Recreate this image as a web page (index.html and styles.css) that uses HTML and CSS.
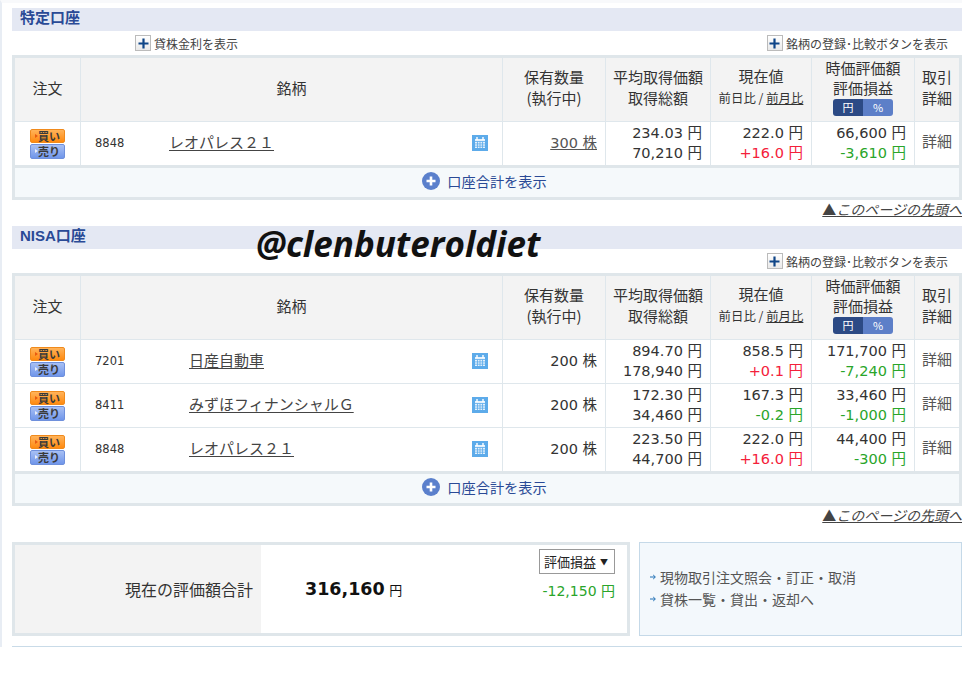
FILE: index.html
```html
<!DOCTYPE html>
<html lang="ja">
<head>
    <meta charset="UTF-8">
    <title>口座管理</title>
    <link rel="stylesheet" href="styles.css">
</head>
<body>
    <div class="page">
        <div class="watermark">@clenbuteroldiet</div>

        <!-- 特定口座 -->
        <h2 class="section-title">特定口座</h2>
        <div class="tools">
            <a class="tool tool-rate"><span class="plus-box"><svg width="11" height="11" viewBox="0 0 11 11"><path d="M5.5 0.5v10M0.5 5.5h10" stroke="#0f4587" stroke-width="2.2" fill="none"/></svg></span>貸株金利を表示</a>
            <a class="tool"><span class="plus-box"><svg width="11" height="11" viewBox="0 0 11 11"><path d="M5.5 0.5v10M0.5 5.5h10" stroke="#0f4587" stroke-width="2.2" fill="none"/></svg></span>銘柄の登録･比較ボタンを表示</a>
        </div>
        <div class="holdings">
            <table>
                <colgroup>
                    <col class="c-order"><col class="c-name"><col class="c-qty"><col class="c-avg"><col class="c-now"><col class="c-val"><col class="c-detail">
                </colgroup>
                <thead>
                    <tr>
                        <th>注文</th>
                        <th>銘柄</th>
                        <th>保有数量<br>(執行中)</th>
                        <th>平均取得価額<br>取得総額</th>
                        <th>現在値<br><span class="sub">前日比 / <u>前月比</u></span></th>
                        <th class="th-val">時価評価額<br>評価損益<div class="toggle"><span class="on">円</span><span class="off">%</span></div></th>
                        <th>取引<br>詳細</th>
                    </tr>
                </thead>
                <tbody>
                    <tr>
                        <td class="order"><div class="buy">買い</div><div class="sell">売り</div></td>
                        <td><div class="stock"><span class="code code-short">8848</span><a class="name">レオパレス２１</a><svg class="cal" width="16" height="16" viewBox="0 0 16 16"><rect width="16" height="16" fill="#5dabea"/><path d="M3 4h10v9H3z" fill="#e4f1fc"/><path d="M3 6.5h10M3 8.9h10M3 11.2h10M5.5 6.5v6.5M8 6.5v6.5M10.5 6.5v6.5" stroke="#5dabea" stroke-width=".8"/><path d="M5 2v3M11 2v3" stroke="#fff" stroke-width="1.4"/></svg></div></td>
                        <td class="num"><u class="qty-link">300 株</u></td>
                        <td class="num">234.03 円<br>70,210 円</td>
                        <td class="num">222.0 円<br><span class="up">+16.0 円</span></td>
                        <td class="num">66,600 円<br><span class="down">-3,610 円</span></td>
                        <td class="detail">詳細</td>
                    </tr>
                </tbody>
            </table>
            <div class="total-row"><svg width="18" height="18" viewBox="0 0 18 18"><circle cx="9" cy="9" r="9" fill="#5b80cc"/><path d="M9 4.5v9M4.5 9h9" stroke="#fff" stroke-width="2.6"/></svg>口座合計を表示</div>
        </div>
        <div class="page-top"><a><b>▲</b><u>このページの先頭へ</u></a></div>

        <!-- NISA口座 -->
        <h2 class="section-title">NISA口座</h2>
        <div class="tools tools-end">
            <a class="tool"><span class="plus-box"><svg width="11" height="11" viewBox="0 0 11 11"><path d="M5.5 0.5v10M0.5 5.5h10" stroke="#0f4587" stroke-width="2.2" fill="none"/></svg></span>銘柄の登録･比較ボタンを表示</a>
        </div>
        <div class="holdings">
            <table>
                <colgroup>
                    <col class="c-order"><col class="c-name"><col class="c-qty"><col class="c-avg"><col class="c-now"><col class="c-val"><col class="c-detail">
                </colgroup>
                <thead>
                    <tr>
                        <th>注文</th>
                        <th>銘柄</th>
                        <th>保有数量<br>(執行中)</th>
                        <th>平均取得価額<br>取得総額</th>
                        <th>現在値<br><span class="sub">前日比 / <u>前月比</u></span></th>
                        <th class="th-val">時価評価額<br>評価損益<div class="toggle"><span class="on">円</span><span class="off">%</span></div></th>
                        <th>取引<br>詳細</th>
                    </tr>
                </thead>
                <tbody>
                    <tr>
                        <td class="order"><div class="buy">買い</div><div class="sell">売り</div></td>
                        <td><div class="stock"><span class="code">7201</span><a class="name">日産自動車</a><svg class="cal" width="16" height="16" viewBox="0 0 16 16"><rect width="16" height="16" fill="#5dabea"/><path d="M3 4h10v9H3z" fill="#e4f1fc"/><path d="M3 6.5h10M3 8.9h10M3 11.2h10M5.5 6.5v6.5M8 6.5v6.5M10.5 6.5v6.5" stroke="#5dabea" stroke-width=".8"/><path d="M5 2v3M11 2v3" stroke="#fff" stroke-width="1.4"/></svg></div></td>
                        <td class="num">200 株</td>
                        <td class="num">894.70 円<br>178,940 円</td>
                        <td class="num">858.5 円<br><span class="up">+0.1 円</span></td>
                        <td class="num">171,700 円<br><span class="down">-7,240 円</span></td>
                        <td class="detail">詳細</td>
                    </tr>
                    <tr>
                        <td class="order"><div class="buy">買い</div><div class="sell">売り</div></td>
                        <td><div class="stock"><span class="code">8411</span><a class="name">みずほフィナンシャルＧ</a><svg class="cal" width="16" height="16" viewBox="0 0 16 16"><rect width="16" height="16" fill="#5dabea"/><path d="M3 4h10v9H3z" fill="#e4f1fc"/><path d="M3 6.5h10M3 8.9h10M3 11.2h10M5.5 6.5v6.5M8 6.5v6.5M10.5 6.5v6.5" stroke="#5dabea" stroke-width=".8"/><path d="M5 2v3M11 2v3" stroke="#fff" stroke-width="1.4"/></svg></div></td>
                        <td class="num">200 株</td>
                        <td class="num">172.30 円<br>34,460 円</td>
                        <td class="num">167.3 円<br><span class="down">-0.2 円</span></td>
                        <td class="num">33,460 円<br><span class="down">-1,000 円</span></td>
                        <td class="detail">詳細</td>
                    </tr>
                    <tr>
                        <td class="order"><div class="buy">買い</div><div class="sell">売り</div></td>
                        <td><div class="stock"><span class="code">8848</span><a class="name">レオパレス２１</a><svg class="cal" width="16" height="16" viewBox="0 0 16 16"><rect width="16" height="16" fill="#5dabea"/><path d="M3 4h10v9H3z" fill="#e4f1fc"/><path d="M3 6.5h10M3 8.9h10M3 11.2h10M5.5 6.5v6.5M8 6.5v6.5M10.5 6.5v6.5" stroke="#5dabea" stroke-width=".8"/><path d="M5 2v3M11 2v3" stroke="#fff" stroke-width="1.4"/></svg></div></td>
                        <td class="num">200 株</td>
                        <td class="num">223.50 円<br>44,700 円</td>
                        <td class="num">222.0 円<br><span class="up">+16.0 円</span></td>
                        <td class="num">44,400 円<br><span class="down">-300 円</span></td>
                        <td class="detail">詳細</td>
                    </tr>
                </tbody>
            </table>
            <div class="total-row"><svg width="18" height="18" viewBox="0 0 18 18"><circle cx="9" cy="9" r="9" fill="#5b80cc"/><path d="M9 4.5v9M4.5 9h9" stroke="#fff" stroke-width="2.6"/></svg>口座合計を表示</div>
        </div>
        <div class="page-top"><a><b>▲</b><u>このページの先頭へ</u></a></div>

        <!-- 評価額合計 -->
        <div class="summary">
            <div class="sum-box">
                <div class="sum-label">現在の評価額合計</div>
                <div class="sum-value"><b>316,160</b> <span>円</span></div>
                <div class="sum-side">
                    <div class="select">評価損益<i>▼</i></div>
                    <div class="down">-12,150 円</div>
                </div>
            </div>
            <div class="sum-links">
                <a><svg width="6" height="6" viewBox="0 0 6 6"><path d="M0 3h5M3.2 1L5.4 3 3.2 5" stroke="#1f6fb5" fill="none"/></svg>現物取引注文照会・訂正・取消</a>
                <a><svg width="6" height="6" viewBox="0 0 6 6"><path d="M0 3h5M3.2 1L5.4 3 3.2 5" stroke="#1f6fb5" fill="none"/></svg>貸株一覧・貸出・返却へ</a>
            </div>
        </div>
        <div class="page-end"></div>
    </div>
</body>
</html>
```

FILE: styles.css
```css
* {
    margin: 0;
    padding: 0;
    box-sizing: border-box;
}

body {
    font-family: "DejaVu Sans", "Noto Sans CJK JP", sans-serif;
    background-color: white;
    color: #333;
    font-size: 14px;
}

.page {
    position: relative;
    height: 647px;
    border-left: 2px solid #e8edf4;
    border-top: 3px solid #f8f9fb;
    margin-right: 9px;
    padding: 5px 0 0 10px;
}

.watermark {
    position: absolute;
    left: 254px;
    top: 221px;
    font-family: "Open Sans", sans-serif;
    font-size: 35px;
    line-height: 40px;
    font-weight: bold;
    font-style: italic;
    color: #111;
}

.section-title {
    height: 23px;
    padding-left: 8px;
    background-color: #e4e8f3;
    color: #2a4a96;
    font-size: 15px;
    line-height: 20px;
    font-family: "Liberation Sans", "Noto Sans CJK JP", sans-serif;
}

.tools {
    height: 24px;
    display: flex;
    justify-content: space-between;
    align-items: center;
    padding: 0 14px 0 123px;
}

.tools-end {
    justify-content: flex-end;
}

.tool {
    display: flex;
    align-items: center;
    font-size: 12px;
    color: #444;
    font-family: "Noto Sans CJK JP", sans-serif;
}

.plus-box {
    width: 16px;
    height: 16px;
    margin-right: 3px;
    display: flex;
    align-items: center;
    justify-content: center;
    border: 1px solid #bbb;
    background: linear-gradient(#fff, #e9e9e9);
}

.holdings {
    border: 3px solid #dfe6ea;
}

table {
    width: 944px;
    border-collapse: separate;
    border-spacing: 0;
    table-layout: fixed;
}

.c-order { width: 66px; }
.c-name { width: 422px; }
.c-qty { width: 103px; }
.c-avg { width: 105px; }
.c-now { width: 101px; }
.c-val { width: 103px; }
.c-detail { width: 44px; }

th, td {
    border-right: 1px solid #dfe7ec;
    border-bottom: 1px solid #dfe7ec;
}

th:last-child, td:last-child {
    border-right: none;
}

tbody tr:last-child td {
    border-bottom: none;
    height: 43px;
}

th {
    height: 64px;
    background-color: #f3f3f3;
    font-family: "Noto Sans CJK JP", sans-serif;
    font-weight: normal;
    font-size: 15px;
    line-height: 21px;
    color: #333;
    vertical-align: middle;
    padding-bottom: 5px;
}

.th-val {
    vertical-align: top;
    line-height: 20px;
    padding: 0;
}

.sub {
    font-size: 12.4px;
}

.toggle {
    width: 60px;
    height: 17px;
    margin: 1px auto 0;
    display: flex;
    border-radius: 3px;
    overflow: hidden;
    font-size: 11px;
    line-height: 16px;
    color: white;
}

.toggle span {
    width: 50%;
    text-align: center;
}

.on {
    background-color: #2c4a85;
}

.off {
    background-color: #5d7fc8;
}

td {
    height: 44px;
    font-size: 14.5px;
    line-height: 20px;
    color: #333;
    vertical-align: middle;
    padding-bottom: 2px;
}

td.order {
    padding: 1px 0 0;
}

.buy, .sell {
    position: relative;
    width: 35px;
    margin: 0 auto;
    border-radius: 2px;
    font-family: "Noto Sans CJK JP", sans-serif;
    font-size: 11px;
    font-weight: bold;
    line-height: 12px;
    text-align: right;
    padding-right: 4px;
    color: #3a3a3a;
}

.buy::before, .sell::before {
    content: "";
    position: absolute;
    left: 4px;
    top: 4px;
    border-left: 3px solid #e9eef8;
    border-top: 2px solid transparent;
    border-bottom: 2px solid transparent;
}

.buy::before {
    border-left-color: #e85a10;
}

.buy {
    height: 14px;
    margin-bottom: 1px;
    border: 1px solid #f08a1c;
    background: linear-gradient(#ffb35a, #ff8a10);
}

.sell {
    height: 15px;
    border: 1px solid #6f90dc;
    background: linear-gradient(#a8c0f4, #7096ea);
}

.stock {
    display: flex;
    align-items: center;
    padding: 0 14px;
}

.code {
    width: 94px;
    font-size: 11.5px;
}

.code-short {
    width: 74px;
}

.name {
    flex: 1;
    margin-bottom: 2px;
    font-family: "Noto Sans CJK JP", sans-serif;
    font-size: 15px;
    color: #444;
    text-decoration: underline;
    text-underline-offset: 2px;
}

.num {
    text-align: right;
    padding-right: 8px;
}

.qty-link {
    color: #555;
}

.up {
    color: #f4203a;
}

.down {
    color: #2aa52a;
}

td.detail {
    text-align: center;
    padding-bottom: 5px;
    font-family: "Noto Sans CJK JP", sans-serif;
    font-size: 15px;
    color: #555;
}

.total-row {
    height: 32px;
    padding: 0 5px 3px 0;
    border-top: 3px solid #dfe6ea;
    background-color: #f5f9fb;
    display: flex;
    align-items: center;
    justify-content: center;
    font-family: "Noto Sans CJK JP", sans-serif;
    font-size: 14.2px;
    color: #2a4a96;
}

.total-row svg {
    margin-right: 7px;
}

.page-top {
    height: 26px;
    text-align: right;
    font-family: "Noto Sans CJK JP", sans-serif;
    font-size: 14px;
    line-height: 18px;
    color: #444;
}

.page-top b {
    font-weight: normal;
}

.page-top a {
    text-decoration: underline;
}

.page-top u {
    font-style: italic;
}

.summary {
    display: flex;
    justify-content: space-between;
    margin-top: 10px;
    height: 94px;
}

.sum-box {
    position: relative;
    width: 618px;
    border: 3px solid #dfe6ea;
    display: flex;
    align-items: center;
}

.sum-label {
    width: 246px;
    align-self: stretch;
    background-color: #f3f3f3;
    padding: 0 8px 0 0;
    display: flex;
    align-items: center;
    justify-content: flex-end;
    font-family: "Noto Sans CJK JP", sans-serif;
    font-size: 16px;
}

.sum-value {
    margin-left: 44px;
    color: #111;
    white-space: nowrap;
}

.sum-value b {
    font-size: 17.5px;
}

.sum-value span {
    font-size: 13px;
}

.sum-side {
    position: absolute;
    right: 12px;
    top: 4px;
    text-align: right;
    font-size: 14px;
}

.select {
    width: 76px;
    height: 25px;
    margin-bottom: 6px;
    padding-left: 4px;
    border: 1px solid #999;
    display: flex;
    align-items: center;
    justify-content: space-between;
    font-family: "Noto Sans CJK JP", sans-serif;
    font-size: 13px;
    color: #222;
    background-color: white;
}

.select i {
    font-style: normal;
    font-size: 8px;
    margin-right: 6px;
}

.sum-links {
    width: 323px;
    border: 1px solid #c5d9e8;
    background-color: #f3f8fc;
    padding: 23px 0 0 10px;
    font-family: "Noto Sans CJK JP", sans-serif;
    font-size: 14px;
    line-height: 22px;
    color: #555;
}

.sum-links a {
    display: flex;
    align-items: center;
}

.sum-links svg {
    margin-right: 4px;
}

.page-end {
    margin-top: 10px;
    border-top: 1px solid #c9dbe8;
}
```
